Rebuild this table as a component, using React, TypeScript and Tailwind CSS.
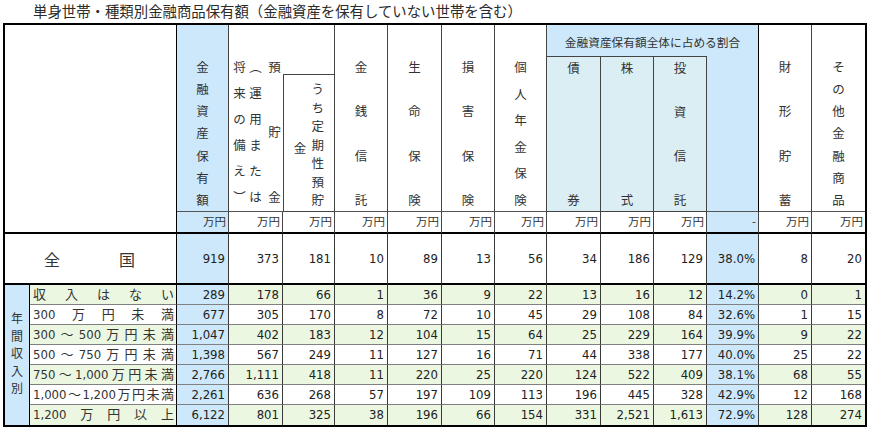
const JP = "font-['Noto_Sans_CJK_JP',sans-serif]"
const NUM = "font-['DejaVu_Sans_Condensed','DejaVu_Sans','Noto_Sans_CJK_JP',sans-serif]"

const zenkoku = ['919', '373', '181', '10', '89', '13', '56', '34', '186', '129', '38.0%', '8', '20']

const rows = [
  { label: ['収', '入', 'は', 'な', 'い'], v: ['289', '178', '66', '1', '36', '9', '22', '13', '16', '12', '14.2%', '0', '1'] },
  { label: ['300', '万', '円', '未', '満'], v: ['677', '305', '170', '8', '72', '10', '45', '29', '108', '84', '32.6%', '1', '15'] },
  { label: ['300', '～', '500', '万', '円', '未', '満'], v: ['1,047', '402', '183', '12', '104', '15', '64', '25', '229', '164', '39.9%', '9', '22'] },
  { label: ['500', '～', '750', '万', '円', '未', '満'], v: ['1,398', '567', '249', '11', '127', '16', '71', '44', '338', '177', '40.0%', '25', '22'] },
  { label: ['750', '～', '1,000', '万', '円', '未', '満'], v: ['2,766', '1,111', '418', '11', '220', '25', '220', '124', '522', '409', '38.1%', '68', '55'] },
  { label: ['1,000', '～', '1,200', '万', '円', '未', '満'], v: ['2,261', '636', '268', '57', '197', '109', '113', '196', '445', '328', '42.9%', '12', '168'] },
  { label: ['1,200', '万', '円', '以', '上'], v: ['6,122', '801', '325', '38', '196', '66', '154', '331', '2,521', '1,613', '72.9%', '128', '274'] },
]

const units = ['万円', '万円', '万円', '万円', '万円', '万円', '万円', '万円', '万円', '万円', '-', '万円', '万円']

// vertical column of characters spread over the cell height
function VCol({ text, className = '' }: { text: string; className?: string }) {
  return (
    <div className={'flex flex-col justify-between items-center w-[13px] ' + className}>
      {[...text].map((c, i) => (
        <span key={i} className="leading-[13px] h-[13px]">
          {c}
        </span>
      ))}
    </div>
  )
}

function HeadCell({ text, blue, last }: { text: string; blue?: boolean; last?: boolean }) {
  return (
    <div
      className={
        'row-span-3 flex justify-center pt-[35px] pb-[5px] border-b border-b-[#555] ' +
        (last ? '' : 'border-r border-r-[#444] ') +
        (blue ? 'bg-[#cce8fa]' : 'bg-white')
      }
    >
      <VCol text={text} />
    </div>
  )
}

function SubCell({ text }: { text: string }) {
  return (
    <div className="row-span-2 flex justify-center pt-[4px] pb-[5px] border-t border-r border-b border-[#444] bg-[#dbeef4]">
      <VCol text={text} />
    </div>
  )
}

function DataCell({ v, bg, i, lastRow }: { v: string; bg: string; i: number; lastRow?: boolean }) {
  const blue = i === 0 || i === 10
  return (
    <div
      className={
        'flex items-center justify-end pr-[3px] text-[13px] text-[#222] ' +
        NUM +
        ' ' +
        (i === 12 ? '' : 'border-r border-r-[#3a3a3a] ') +
        (lastRow ? '' : 'border-b border-b-[#808080] ') +
        (blue ? 'bg-[#cce8fa]' : bg)
      }
    >
      {v}
    </div>
  )
}

export default function App() {
  return (
    <div className={'w-[870px] h-[430px] bg-white text-[#333] ' + JP}>
      <div className="h-[23px] pl-[33px] text-[14.4px] leading-[21px] text-[#2a2a2a]">
        単身世帯・種類別金融商品保有額（金融資産を保有していない世帯を含む）
      </div>
      <div className="ml-[3px] w-[864px] border-2 border-black grid grid-cols-[25px_147px_52px_54px_52px_53px_54px_53px_52px_54px_53px_53px_52px_53px_53px] grid-rows-[31px_19px_137px_22px_51px_repeat(7,20px)] text-[12.5px]">
        {/* header */}
        <div className="col-span-2 row-span-4 border-r border-r-black border-b-2 border-b-black bg-white" />
        <HeadCell text="金融資産保有額" blue />
        <div className="row-span-3 flex pt-[35px] pb-[8px] pl-[4px] border-b border-b-[#555] bg-white">
          <VCol text="将来の備え︶" />
          <VCol text="︵運用または" className="ml-[3px]" />
          <VCol text="預貯金" className="ml-[6px]" />
        </div>
        <div className="row-span-2 border-r border-b border-[#444] bg-white" />
        <HeadCell text="金銭信託" />
        <HeadCell text="生命保険" />
        <HeadCell text="損害保険" />
        <HeadCell text="個人年金保険" />
        <div className="col-span-4 flex items-center justify-center pt-[2px] border-r border-r-black bg-[#cce8fa] text-[11.7px]">
          金融資産保有額全体に占める割合
        </div>
        <HeadCell text="財形貯蓄" />
        <HeadCell text="その他金融商品" last />
        <SubCell text="債券" />
        <SubCell text="株式" />
        <SubCell text="投資信託" />
        <div className="row-span-2 border-r border-b border-r-black border-b-[#555] bg-[#cce8fa]" />
        <div className="flex justify-center gap-[5px] pt-[7px] pb-[5px] border-l border-r border-b border-[#444] bg-white">
          <div className="flex flex-col justify-center">
            <span className="leading-[13px] mt-[6px]">金</span>
          </div>
          <VCol text="うち定期性預貯" />
        </div>

        {/* units */}
        {units.map((u, i) => (
          <div
            key={'u' + i}
            className={
              'flex items-center justify-end pr-[2px] text-[11.5px] border-b-2 border-b-black ' +
              (i === 12 ? '' : 'border-r border-r-[#444] ') +
              (i === 0 || i === 10 ? 'bg-[#cce8fa]' : 'bg-white')
            }
          >
            {u}
          </div>
        ))}

        {/* 全国 */}
        <div className="col-span-2 flex items-center justify-between pl-[39px] pr-[41px] text-[16px] border-r border-r-black border-b-2 border-b-black bg-white">
          <span>全</span>
          <span>国</span>
        </div>
        {zenkoku.map((v, i) => (
          <div
            key={'z' + i}
            className={
              'flex items-center justify-end pr-[3px] text-[13px] text-[#222] border-b-2 border-b-black ' +
              NUM +
              ' ' +
              (i === 12 ? '' : 'border-r border-r-[#3a3a3a] ') +
              (i === 0 || i === 10 ? 'bg-[#cce8fa]' : 'bg-white')
            }
          >
            {v}
          </div>
        ))}

        {/* income rows */}
        <div className="row-span-7 flex flex-col items-center justify-center pb-[4px] border-r border-r-black bg-[#cce8fa] text-[12px]">
          {[...'年間収入別'].map((c, i) => (
            <span key={i} className="leading-[17.5px]">
              {c}
            </span>
          ))}
        </div>
        {rows.map((r, ri) => {
          const bg = ri % 2 === 0 ? 'bg-[#ebf7e1]' : 'bg-white'
          const lastRow = ri === rows.length - 1
          return [
            <div
              key={'l' + ri}
              className={
                'flex items-center justify-between pl-[3px] pr-[2px] text-[13px] border-r border-r-black ' +
                NUM +
                ' ' +
                (lastRow ? '' : 'border-b border-b-[#808080] ') +
                bg
              }
            >
              {r.label.map((t, ti) => (
                <span key={ti}>{t}</span>
              ))}
            </div>,
            ...r.v.map((v, i) => <DataCell key={'d' + ri + '-' + i} v={v} bg={bg} i={i} lastRow={lastRow} />),
          ]
        })}
      </div>
    </div>
  )
}
